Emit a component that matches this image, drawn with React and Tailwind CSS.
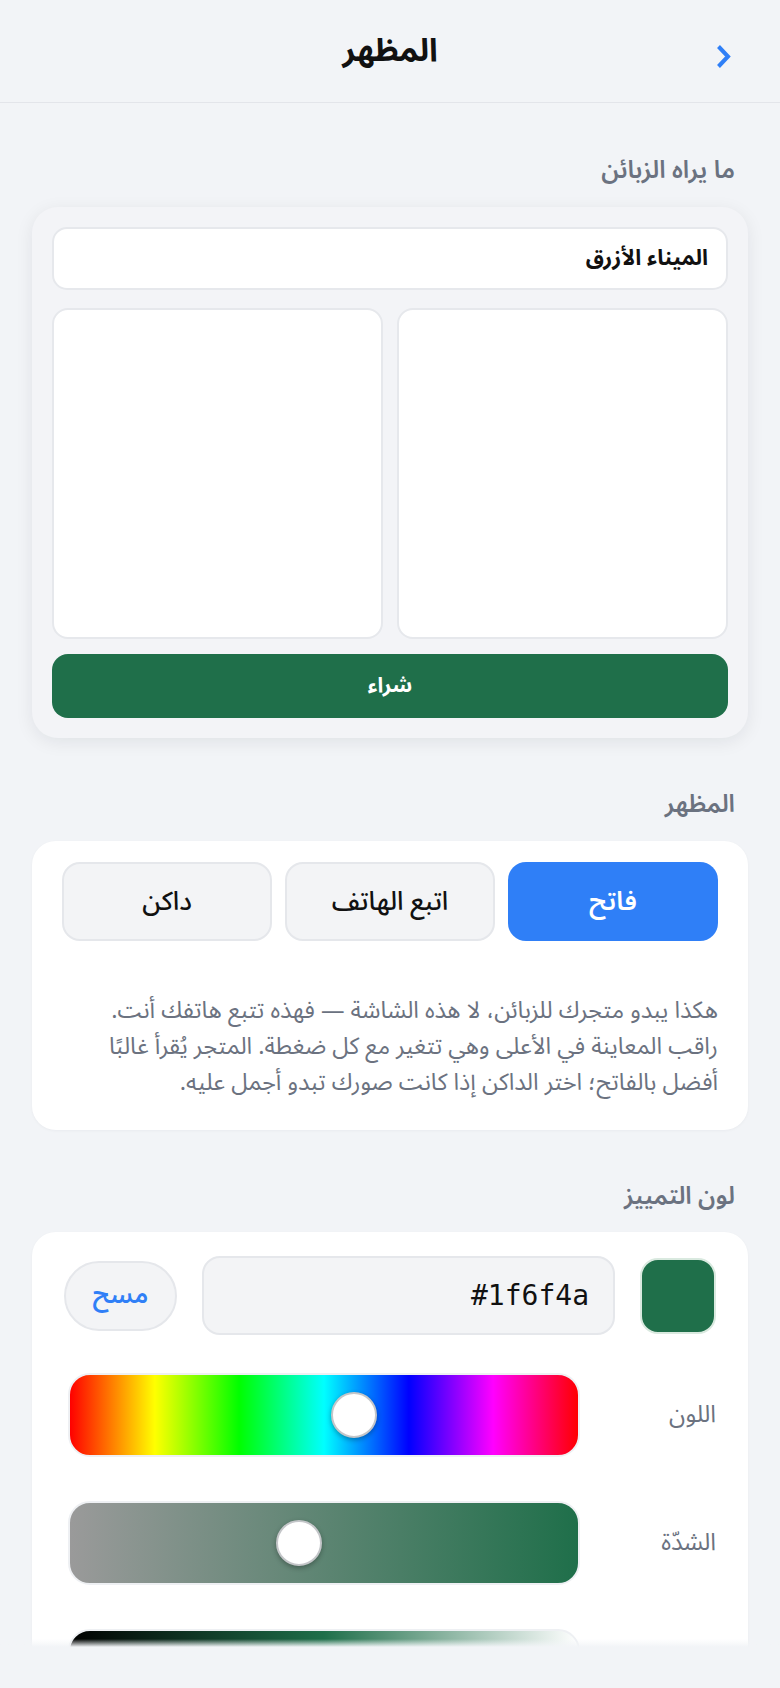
import React from 'react';

const font = { fontFamily: '"Noto Sans Arabic", "Noto Sans Arabic UI", "Noto Sans", sans-serif' };

const SectionLabel = ({ children, className = '' }) => (
  <div className={`px-[13px] text-[24.5px] leading-[30px] font-semibold text-[#6b7280] ${className}`}>{children}</div>
);

const Slider = ({ label, gradient, pos }) => (
  <div className="flex items-center">
    <div className="w-[136px] shrink-0 text-[24px] text-[#6b7280]">{label}</div>
    <div
      className="relative h-[84px] flex-1 ml-[4px] rounded-[22px] border-2 border-[#eef0f3]"
      style={{ background: gradient }}
    >
      <div
        className="absolute top-1/2 h-[46px] w-[46px] -translate-x-1/2 -translate-y-1/2 rounded-full border-2 border-[#c4c6c9] bg-white shadow-[0_2px_5px_rgba(0,0,0,0.3)]"
        style={{ left: pos }}
      />
    </div>
  </div>
);

const App = () => {
  return (
    <div dir="rtl" style={font} className="h-[1688px] w-[780px] overflow-hidden bg-[#f2f4f7] flex flex-col text-[#111827]">
      <header className="relative h-[103px] shrink-0 border-b border-[#e3e5ea] flex items-center justify-center">
        <h1 className="text-[32px] font-bold text-[#111]">المظهر</h1>
        <svg className="absolute right-[48px] top-[44px]" width="17" height="25" viewBox="0 0 17 25" fill="none">
          <path d="M3.5 2.5 L13 12.5 L3.5 22.5" stroke="#2f7ff7" strokeWidth="4" strokeLinejoin="miter" />
        </svg>
      </header>

      <main className="relative flex-1 overflow-hidden px-8">
        <SectionLabel className="mt-[52px]">ما يراه الزبائن</SectionLabel>

        <div className="mt-[22px] rounded-[26px] bg-[#f3f4f7] p-[20px] shadow-[0_4px_18px_rgba(15,23,42,0.08)]">
          <div className="h-[63px] rounded-[15px] border-2 border-[#e6e8ec] bg-white px-[18px] flex items-center text-[22px] font-bold text-[#111]">
            الميناء الأزرق
          </div>
          <div className="mt-[18px] grid grid-cols-2 gap-[14px]">
            <div className="h-[331px] rounded-[16px] border-2 border-[#e6e8ec] bg-white" />
            <div className="h-[331px] rounded-[16px] border-2 border-[#e6e8ec] bg-white" />
          </div>
          <button className="mt-[15px] h-[64px] w-full rounded-[16px] bg-[#1f6f4a] text-[21px] font-bold text-white">
            شراء
          </button>
        </div>

        <SectionLabel className="mt-[51px]">المظهر</SectionLabel>

        <div className="mt-[22px] rounded-[24px] bg-white px-[30px] pt-[21px] pb-[29px] shadow-[0_1px_3px_rgba(15,23,42,0.04)]">
          <div className="grid grid-cols-3 gap-[13px]">
            <button className="h-[79px] rounded-[18px] bg-[#2f7ff7] text-[26px] font-semibold text-white">فاتح</button>
            <button className="h-[79px] rounded-[18px] border-2 border-[#e5e7eb] bg-[#f3f4f6] text-[26px] font-medium text-[#111]">اتبع الهاتف</button>
            <button className="h-[79px] rounded-[18px] border-2 border-[#e5e7eb] bg-[#f3f4f6] text-[26px] font-medium text-[#111]">داكن</button>
          </div>
          <p className="mt-[52px] text-[23.5px] leading-[36px] text-[#6b7280]">
            هكذا يبدو متجرك للزبائن، لا هذه الشاشة — فهذه تتبع هاتفك أنت. راقب المعاينة في الأعلى وهي تتغير مع كل ضغطة. المتجر يُقرأ غالبًا أفضل بالفاتح؛ اختر الداكن إذا كانت صورك تبدو أجمل عليه.
          </p>
        </div>

        <SectionLabel className="mt-[51px]">لون التمييز</SectionLabel>

        <div className="mt-[21px] rounded-[24px] bg-white px-[32px] pt-[24px] pb-[40px] shadow-[0_1px_3px_rgba(15,23,42,0.04)]">
          <div className="flex items-center gap-[25px]">
            <div className="h-[76px] w-[76px] shrink-0 rounded-[18px] border-2 border-[#d9e9df] bg-[#1f6f4a]" />
            <div
              dir="ltr"
              className="h-[79px] flex-1 rounded-[18px] border-2 border-[#e5e7eb] bg-[#f3f4f6] px-[24px] flex items-center justify-end text-[28px] text-[#111]"
              style={{ fontFamily: '"DejaVu Sans Mono", "Liberation Mono", monospace' }}
            >
              #1f6f4a
            </div>
            <button className="h-[70px] w-[113px] shrink-0 rounded-full border-2 border-[#e5e7eb] bg-[#f3f4f6] text-[25px] font-semibold text-[#2f7ff7]">
              مسح
            </button>
          </div>

          <div className="mt-[38px] flex flex-col gap-[44px]">
            <Slider
              label="اللون"
              pos="56%"
              gradient="linear-gradient(to right, #ff0000, #ffff00 16.7%, #00ff00 33.3%, #00ffff 50%, #0000ff 66.7%, #ff00ff 83.3%, #ff0000)"
            />
            <Slider label="الشدّة" pos="45%" gradient="linear-gradient(to right, #9a9a9a, #1f6f4a)" />
            <Slider label="" pos="68%" gradient="linear-gradient(to right, #000000, #1f6f4a 50%, #ffffff)" />
          </div>
        </div>
      </main>

      <div className="relative h-[41px] shrink-0 bg-[#f2f4f7]">
        <div className="absolute -top-[8px] left-0 right-0 h-[8px] bg-gradient-to-t from-[#f2f4f7] to-transparent" />
      </div>
    </div>
  );
};

export default App;
